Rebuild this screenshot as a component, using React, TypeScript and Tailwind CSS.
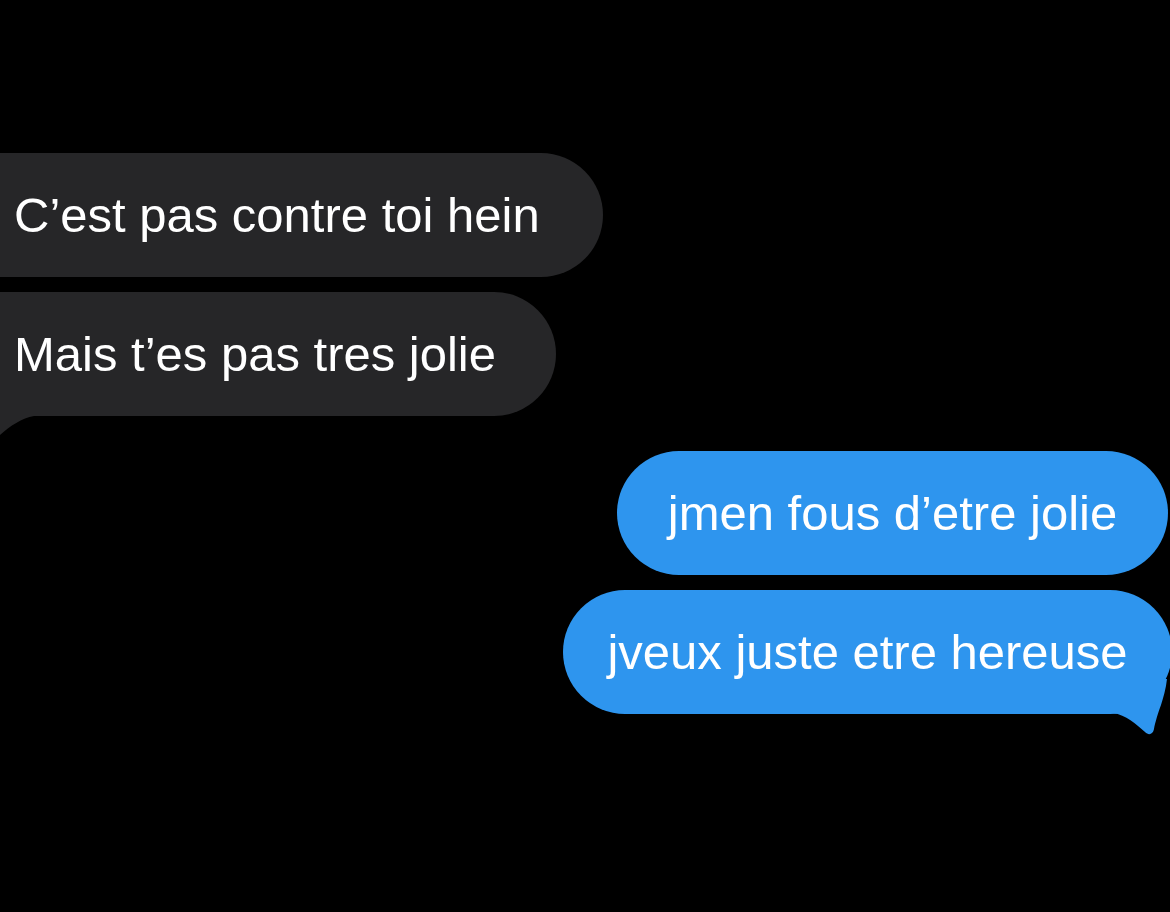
import React from 'react';

function GreyBubble({ text, width, tail }: { text: string; width: string; tail?: boolean }) {
  return (
    <div className={`relative ml-[-60px] ${width} h-[124px] rounded-full bg-[#262628] flex items-center pl-[74px]`}>
      {tail && (
        <svg className="absolute left-[60px] bottom-[-20px]" width="60" height="40" viewBox="0 0 60 40">
          <path d="M0 0 L56 0 L56 20 L34 20 C22 22 10 30 0 39 Z" fill="#262628" />
        </svg>
      )}
      <span className="relative text-white text-[49px] leading-none whitespace-nowrap">{text}</span>
    </div>
  );
}

function BlueBubble({ text, width, tail }: { text: string; width: string; tail?: boolean }) {
  return (
    <div className={`relative ${width} h-[124px] rounded-full bg-[#2e95ee] flex items-center justify-center`}>
      {tail && (
        <svg className="absolute right-0 bottom-[-21px]" width="80" height="56" viewBox="0 0 80 56">
          <path
            d="M0 0 L75 0 C74 10 71 19 69 26 C66 34 63 44 62 50 C61 55 57 57 53 53 C44 45 34 36 21 34 L0 34 Z"
            fill="#2e95ee"
          />
        </svg>
      )}
      <span className="relative text-white text-[49px] leading-none whitespace-nowrap">{text}</span>
    </div>
  );
}

export default function App() {
  return (
    <div
      className="w-full min-h-[912px] bg-black overflow-hidden flex flex-col pt-[153px]"
      style={{ fontFamily: '"Liberation Sans", Arial, sans-serif' }}
    >
      <div className="flex flex-col items-start gap-[15px]">
        <GreyBubble text="C’est pas contre toi hein" width="w-[663px]" />
        <GreyBubble text="Mais t’es pas tres jolie" width="w-[616px]" tail />
      </div>

      <div className="mt-[35px] flex flex-col items-end gap-[15px]">
        <div className="mr-[2px]">
          <BlueBubble text="jmen fous d’etre jolie" width="w-[551px]" />
        </div>
        <div className="mr-[-2px]">
          <BlueBubble text="jveux juste etre hereuse" width="w-[609px]" tail />
        </div>
      </div>
    </div>
  );
}
